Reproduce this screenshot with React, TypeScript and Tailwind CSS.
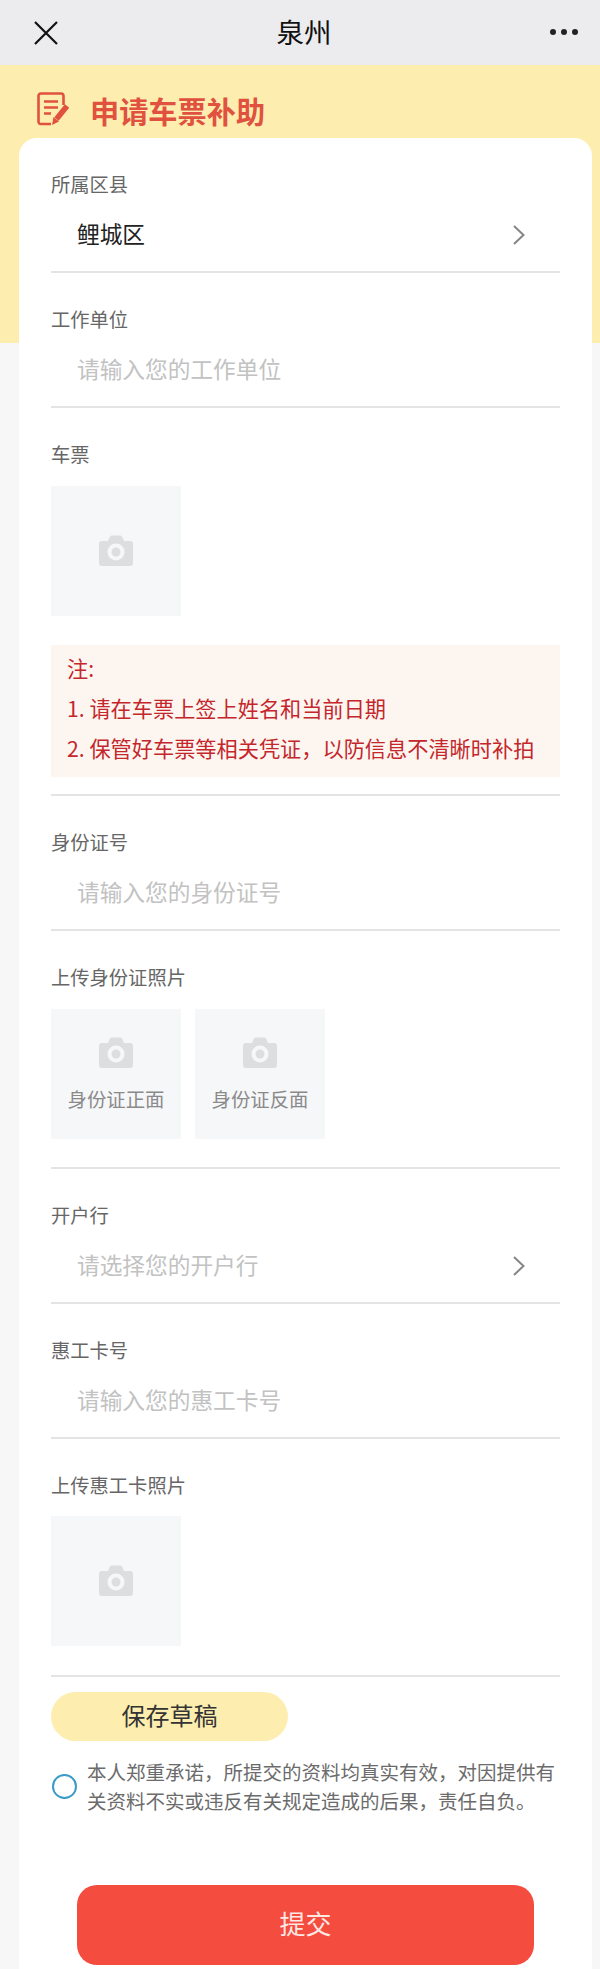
const font = "font-['Noto_Sans_CJK_SC',sans-serif]";
const C = "\uFF0C";
const noteLine = `2. 保管好车票等相关凭证${C}以防信息不清晰时补拍`;
const pledge = `本人郑重承诺${C}所提交的资料均真实有效${C}对因提供有关资料不实或违反有关规定造成的后果${C}责任自负。`;

function Camera() {
  return (
    <svg width="34" height="31" viewBox="0 0 34 31" className="block">
      <path d="M3 6 H9 L11 1.5 Q11.5 0.5 13 0.5 H21 Q22.5 0.5 23 1.5 L25 6 H31 Q34 6 34 9 V28 Q34 31 31 31 H3 Q0 31 0 28 V9 Q0 6 3 6 Z" fill="#dcdee0" />
      <circle cx="17" cy="17" r="8.5" fill="#f6f7f9" />
      <circle cx="17" cy="17" r="4.5" fill="#dcdee0" />
    </svg>
  );
}

function Chevron() {
  return (
    <svg width="14" height="22" viewBox="0 0 14 22" className="block">
      <polyline points="2,2 11.5,11 2,20" fill="none" stroke="#858585" strokeWidth="2" />
    </svg>
  );
}

function Divider() {
  return <div className="h-[2px] bg-[#e4e4e4]" />;
}

function Label({ children }: { children: string }) {
  return <div className="pt-[32px] text-[19.3px] leading-[28px] text-[#666666]">{children}</div>;
}

function Row({ text, placeholder, chevron }: { text: string; placeholder?: boolean; chevron?: boolean }) {
  return (
    <>
      <div className="mb-[11px] mt-[12px] flex h-[50px] items-center justify-between pl-[26px] pr-[34px]">
        <span className={`relative top-[-1px] text-[22.7px] leading-[50px] ${placeholder ? "text-[#c2c2c2]" : "text-[#222222]"}`}>{text}</span>
        {chevron ? <Chevron /> : null}
      </div>
      <Divider />
    </>
  );
}

function PhotoBox() {
  return (
    <div className="flex h-[130px] w-[130px] items-center justify-center bg-[#f6f7f9] pb-[2px]">
      <Camera />
    </div>
  );
}

function CaptionBox({ caption }: { caption: string }) {
  return (
    <div className="flex h-[130px] w-[130px] flex-col items-center bg-[#f6f7f9] pt-[28px]">
      <Camera />
      <div className="mt-[17px] text-[19.4px] leading-[28px] text-[#8a8a8a]">{caption}</div>
    </div>
  );
}

export default function App() {
  return (
    <div className={`${font} relative h-[1969px] w-[600px] overflow-hidden bg-[#f7f7f7]`}>
      <div className="flex h-[65px] items-center justify-between bg-[#ececee] pl-[34px] pr-[22px]">
        <svg width="24" height="24" viewBox="0 0 24 24" className="block">
          <path d="M1 1 L23 23 M23 1 L1 23" stroke="#111111" strokeWidth="2.2" fill="none" />
        </svg>
        <div className="relative top-[-2px] text-[27.5px] leading-[36px] text-[#111111]">泉州</div>
        <div className="relative top-[-1px] flex gap-[5px]">
          <span className="h-[6px] w-[6px] rounded-full bg-[#222222]" />
          <span className="h-[6px] w-[6px] rounded-full bg-[#222222]" />
          <span className="h-[6px] w-[6px] rounded-full bg-[#222222]" />
        </div>
      </div>

      <div className="absolute left-0 right-0 top-[65px] h-[278px] bg-[#fdeeb0]" />

      <div className="relative">
        <div className="flex h-[73px] items-start pl-[37px] pt-[27px]">
          <svg width="32" height="34" viewBox="0 0 32 34" className="block">
            <path d="M14 32 H4 Q1.5 32 1.5 29.5 V4 Q1.5 1.5 4 1.5 H24 Q26.5 1.5 26.5 4 V13" fill="none" stroke="#e0513f" strokeWidth="2.6" />
            <path d="M7 9.5 H21 M7 15.5 H21 M7 21.5 H14" fill="none" stroke="#e0513f" strokeWidth="2.6" />
            <path d="M30 14 L19.5 27" fill="none" stroke="#e0513f" strokeWidth="5.5" />
            <path d="M16.5 25 L22 29.5 L15 33 Z" fill="#e0513f" />
          </svg>
          <div className="ml-[21px] mt-[-2px] text-[29.2px] font-bold leading-[40px] text-[#e0513f]">申请车票补助</div>
        </div>

        <div className="ml-[19px] h-[1831px] w-[573px] rounded-t-[18px] bg-white px-[32px]">
          <Label>所属区县</Label>
          <Row text="鲤城区" chevron />
          <Label>工作单位</Label>
          <Row text="请输入您的工作单位" placeholder />

          <Label>车票</Label>
          <div className="mt-[18px]">
            <PhotoBox />
          </div>
          <div className="mt-[29px] h-[132px] bg-[#fdf6f0] pl-[16px] pt-[3px] text-[21.2px] leading-[40px] text-[#c4262c]">
            <div>注:</div>
            <div>1. 请在车票上签上姓名和当前日期</div>
            <div>{noteLine}</div>
          </div>
          <div className="mt-[17px]">
            <Divider />
          </div>

          <Label>身份证号</Label>
          <Row text="请输入您的身份证号" placeholder />

          <Label>上传身份证照片</Label>
          <div className="mb-[28px] mt-[18px] flex gap-[14px]">
            <CaptionBox caption="身份证正面" />
            <CaptionBox caption="身份证反面" />
          </div>
          <Divider />

          <Label>开户行</Label>
          <Row text="请选择您的开户行" placeholder chevron />
          <Label>惠工卡号</Label>
          <Row text="请输入您的惠工卡号" placeholder />

          <Label>上传惠工卡照片</Label>
          <div className="mb-[29px] mt-[17px]">
            <PhotoBox />
          </div>
          <Divider />

          <div className="mt-[15px] flex h-[49px] w-[237px] items-center justify-center rounded-full bg-[#fdeeb0] text-[24px] text-[#333333]">
            <span className="relative top-[-2px]">保存草稿</span>
          </div>

          <div className="mt-[16px] flex items-center">
            <span className="ml-[1px] h-[25px] w-[25px] shrink-0 rounded-full border-2 border-[#3a9bc8]" />
            <div className="ml-[10px] w-[475px] text-[19.5px] leading-[29px] text-[#6b6b6b]">{pledge}</div>
          </div>

          <div className="ml-[26px] mt-[70px] flex h-[80px] w-[457px] items-center justify-center rounded-[20px] bg-[#f44c3f] text-[26px] text-[#fde8e4]">
            <span className="relative top-[-3px]">提交</span>
          </div>
        </div>
      </div>
    </div>
  );
}
